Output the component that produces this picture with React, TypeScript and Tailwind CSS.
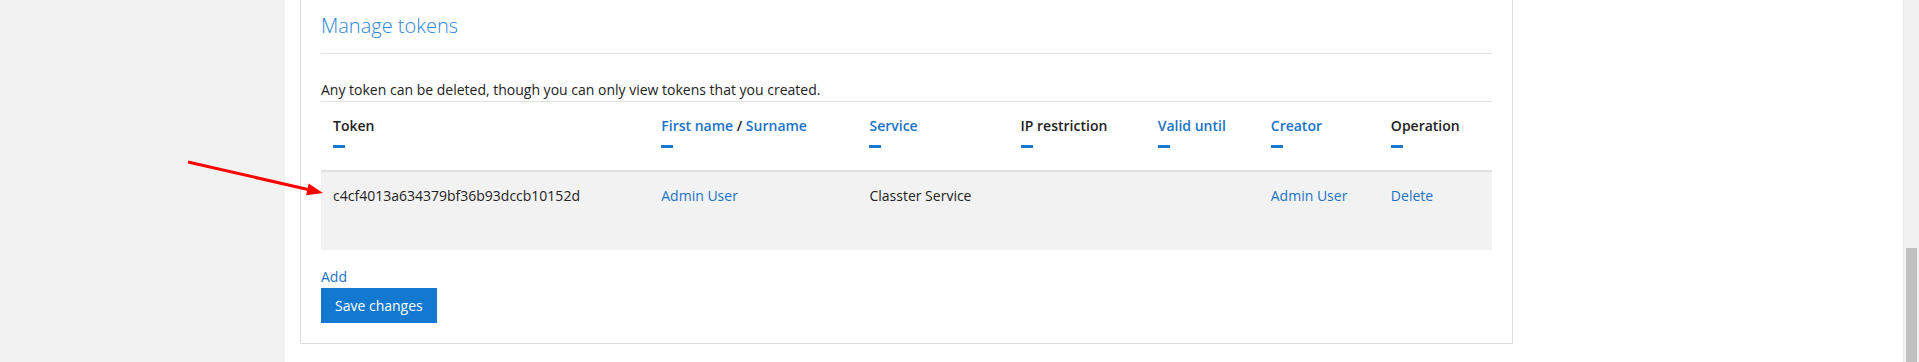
import React from "react";

type Col = { label: string; sortable: boolean; width: string };

const columns: Col[] = [
  { label: "Token", sortable: false, width: "w-[328px]" },
  { label: "First name / Surname", sortable: true, width: "w-[208px]" },
  { label: "Service", sortable: true, width: "w-[151px]" },
  { label: "IP restriction", sortable: false, width: "w-[137px]" },
  { label: "Valid until", sortable: true, width: "w-[113px]" },
  { label: "Creator", sortable: true, width: "w-[120px]" },
  { label: "Operation", sortable: false, width: "w-[113px]" },
];

const tokens = [
  {
    token: "c4cf4013a634379bf36b93dccb10152d",
    name: "Admin User",
    service: "Classter Service",
    ip: "",
    validUntil: "",
    creator: "Admin User",
  },
];

function HeaderLabel({ col }: { col: Col }) {
  if (col.label === "First name / Surname") {
    return (
      <span>
        <a className="text-[#1a73c8]">First name</a>
        <span className="text-[#222]"> / </span>
        <a className="text-[#1a73c8]">Surname</a>
      </span>
    );
  }
  return <span className={col.sortable ? "text-[#1a73c8]" : "text-[#222]"}>{col.label}</span>;
}

function Arrow() {
  return (
    <svg className="absolute left-0 top-0 pointer-events-none" width="400" height="260">
      <line x1="188" y1="162" x2="308" y2="189.5" stroke="#ff0000" strokeWidth="3" />
      <polygon points="323,193 308.7,183.6 306.1,195.3" fill="#ff0000" />
    </svg>
  );
}

export default function App() {
  return (
    <div className="relative flex w-[1919px] h-[362px] overflow-hidden bg-white font-['Open_Sans','Noto_Sans',sans-serif] text-[14px] leading-5 text-[#222]">
      <div className="w-[285px] shrink-0 bg-[#f2f2f2]" />

      <div className="flex-1 bg-white">
        <div className="ml-[15px] w-[1213px] border border-t-0 border-[#dddddd] px-5 pt-3 pb-5">
          <div className="border-b border-[#e1e1e1] pb-[13px]">
            <h2 className="text-[20px] leading-7 font-light text-[#2b88d8]">Manage tokens</h2>
          </div>

          <p className="mt-[26px] pb-px border-b border-[#e1e1e1]">
            Any token can be deleted, though you can only view tokens that you created.
          </p>

          <table className="w-full table-fixed border-collapse text-left">
            <thead>
              <tr className="border-b-2 border-[#dfe1e4]">
                {columns.map((col) => (
                  <th key={col.label} className={`${col.width} px-3 pt-[14px] pb-[22px] align-top font-semibold`}>
                    <HeaderLabel col={col} />
                    <div className="mt-[9px] h-[3px] w-3 bg-[#1a78cf]" />
                  </th>
                ))}
              </tr>
            </thead>
            <tbody>
              {tokens.map((t) => (
                <tr key={t.token} className="h-[79px] bg-[#f2f2f2]">
                  <td className="px-3 pt-[14px] align-top">{t.token}</td>
                  <td className="px-3 pt-[14px] align-top">
                    <a className="text-[#1a73c8]">{t.name}</a>
                  </td>
                  <td className="px-3 pt-[14px] align-top">{t.service}</td>
                  <td className="px-3 pt-[14px] align-top">{t.ip}</td>
                  <td className="px-3 pt-[14px] align-top">{t.validUntil}</td>
                  <td className="px-3 pt-[14px] align-top">
                    <a className="text-[#1a73c8]">{t.creator}</a>
                  </td>
                  <td className="px-3 pt-[14px] align-top">
                    <a className="text-[#1a73c8]">Delete</a>
                  </td>
                </tr>
              ))}
            </tbody>
          </table>

          <div className="mt-[17px]">
            <a className="text-[#1a73c8]">Add</a>
          </div>
          <button className="mt-px h-[35px] px-[14px] bg-[#1378d0] text-white">Save changes</button>
        </div>
      </div>

      <div className="w-4 shrink-0 flex flex-col border-l border-[#e8e8e8] bg-[#f1f1f1]">
        <div className="flex-1" />
        <div className="mx-[2px] h-[114px] bg-[#c1c1c1]" />
      </div>

      <Arrow />
    </div>
  );
}
